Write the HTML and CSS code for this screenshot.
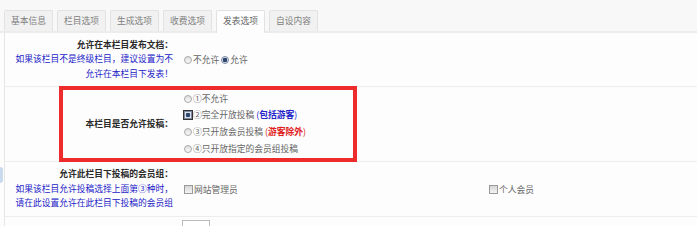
FILE: index.html
```html
<!DOCTYPE html>
<html lang="zh-CN">
<head>
<meta charset="UTF-8">
<title>发表选项</title>
<link rel="stylesheet" href="styles.css">
</head>
<body>
<div class="tabbar">
  <span class="tab">基本信息</span>
  <span class="tab">栏目选项</span>
  <span class="tab">生成选项</span>
  <span class="tab">收费选项</span>
  <span class="tab active">发表选项</span>
  <span class="tab">自设内容</span>
</div>
<div class="page">
  <div class="side"><span class="side-mark"></span></div>
  <div class="form">
    <div class="row row-publish">
      <div class="label">
        <b>允许在本栏目发布文档：</b>
        <span class="tip">如果该栏目不是终级栏目，建议设置为不</span>
        <span class="tip">允许在本栏目下发表！</span>
      </div>
      <div class="value">
        <label><input type="radio" name="allowpub">不允许</label>
        <label><input type="radio" name="allowpub" checked>允许</label>
      </div>
    </div>
    <div class="row row-submit">
      <div class="label"><b>本栏目是否允许投稿：</b></div>
      <div class="value stack">
        <label><input type="radio" name="submit">①不允许</label>
        <label><input type="radio" name="submit" class="focused" checked>②完全开放投稿 <span class="note-blue">(<b>包括游客</b>)</span></label>
        <label><input type="radio" name="submit">③只开放会员投稿 <span class="note-red">(<b>游客除外</b>)</span></label>
        <label><input type="radio" name="submit">④只开放指定的会员组投稿</label>
      </div>
    </div>
    <div class="row row-groups">
      <div class="label">
        <b>允许此栏目下投稿的会员组：</b>
        <span class="tip">如果该栏目允许投稿选择上面第③种时，</span>
        <span class="tip">请在此设置允许在此栏目下投稿的会员组</span>
      </div>
      <div class="value groups">
        <label><input type="checkbox">网站管理员</label>
        <label><input type="checkbox">个人会员</label>
      </div>
    </div>
    <div class="row row-next">
      <div class="label"></div>
      <div class="value"><input type="text" class="small-input"></div>
    </div>
    <div class="highlight"></div>
  </div>
</div>
</body>
</html>
```

FILE: styles.css
```css
body {
    margin: 0;
    background-color: #fdfdfd;
    font-family: "Noto Sans CJK SC", "Liberation Sans", sans-serif;
    font-size: 8.75px;
    color: #666;
    overflow: hidden;
}

.tabbar {
    display: flex;
    gap: 4px;
    padding: 10px 0 0 4px;
    background-color: #f8f8f8;
    border-bottom: 2px solid #ececec;
}

.tab {
    width: 47px;
    height: 20px;
    line-height: 20px;
    text-align: center;
    color: #808080;
    background-color: #f1f1f1;
    border: 1px solid #e2e2e2;
    border-bottom: none;
    border-radius: 2px 2px 0 0;
}

.tab.active {
    background-color: #fdfdfd;
    color: #666;
    height: 22px;
    margin-bottom: -2px;
}

.page {
    display: flex;
}

.side {
    width: 4px;
}

.side-mark {
    display: block;
    width: 3px;
    height: 16px;
    margin-top: 134px;
    background-color: #c9d9ee;
    border-radius: 0 3px 3px 0;
}

.form {
    flex: 1;
    position: relative;
    border-left: 1px solid #e6e6e6;
}

.row {
    display: grid;
    grid-template-columns: 171px 1fr;
    border-bottom: 1px solid #ededed;
}

.row-publish { height: 53px; }
.row-submit { height: 74px; }
.row-groups { height: 54px; }
.row-next { height: 30px; border-bottom: none; }

.label {
    display: flex;
    flex-direction: column;
    justify-content: center;
    align-items: flex-end;
    padding-right: 3px;
    line-height: 14.6px;
    white-space: nowrap;
}

.label b {
    color: #2a2a2a;
}

.tip {
    color: #2323c8;
}

.value {
    display: flex;
    align-items: center;
    padding-left: 8px;
    white-space: nowrap;
}

.value label {
    display: block;
    margin-right: 2px;
}

.stack {
    flex-direction: column;
    align-items: flex-start;
    justify-content: center;
}

.stack label {
    height: 16.7px;
    line-height: 16.7px;
}

.groups {
    display: grid;
    grid-template-columns: 305px 1fr;
    align-items: center;
}

.value input {
    vertical-align: -1px;
}

.value input[type=radio] {
    appearance: none;
    width: 8px;
    height: 8px;
    margin: 0 1px 0 0;
    border: 1px solid #aaa;
    border-radius: 50%;
    background: linear-gradient(#dedede, #fafafa);
}

.value input[type=radio]:checked {
    background: radial-gradient(circle, #2d4670 0 2px, #dfe6f0 2.6px);
    border-color: #7d8aa0;
}

.value input.focused {
    outline: 1px solid #333;
    outline-offset: 0;
    border-radius: 0;
    background: radial-gradient(circle, #2d4670 0 2px, #dfe6f0 2.6px, #dfe6f0 3px, #8c96a8 3.5px);
}

.value input[type=checkbox] {
    appearance: none;
    width: 9px;
    height: 9px;
    margin: 0 1px 0 0;
    border: 1px solid #9a9a9a;
    background: linear-gradient(#d6d6d6, #f4f4f4);
}

.note-blue {
    color: #2323c8;
}

.note-red {
    color: #e02020;
}

.small-input {
    width: 26px;
    height: 18px;
    margin: 3px 0 0 -2px;
    padding: 0;
    border: 1px solid #bbb;
    background-color: #fff;
    align-self: flex-start;
}

.highlight {
    position: absolute;
    left: 54px;
    top: 53px;
    width: 290px;
    height: 68px;
    border: 4px solid #ee2c2c;
}
```
